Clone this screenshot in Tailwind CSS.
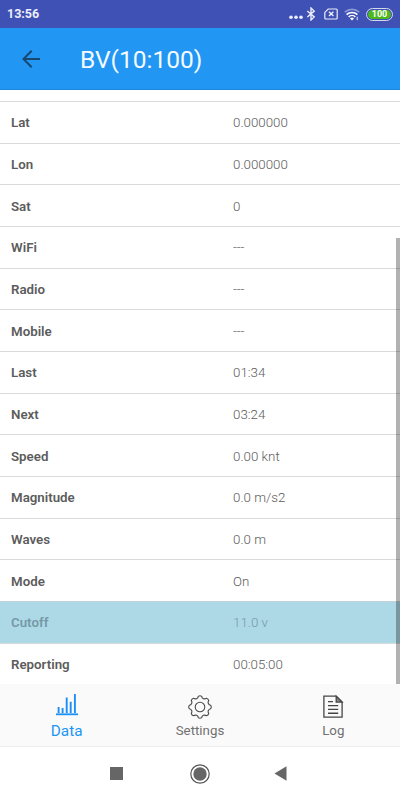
<!DOCTYPE html>
<html lang="en">
  <head>
    <meta charset="UTF-8" />
    <title>BV(10:100)</title>
    <script src="https://cdn.jsdelivr.net/npm/@tailwindcss/browser@4"></script>
  </head>
  <body class="h-[800px] w-[400px] overflow-hidden flex flex-col bg-white font-['Roboto',sans-serif] text-[#5c5c5c]">
    <!-- Status bar -->
    <div class="h-7 shrink-0 flex items-center bg-[#3f51b5] pl-[7px] pr-[7px] text-[#eceefa]">
      <span class="pt-px text-[12.5px] font-bold leading-none">13:56</span>
      <div class="ml-auto flex items-center">
        <svg class="w-[14px] h-4 mr-[3px]" viewBox="0 0 14 16" fill="#eceefa">
          <circle cx="2" cy="11.2" r="1.8" />
          <circle cx="7" cy="11.2" r="1.8" />
          <circle cx="12" cy="11.2" r="1.8" />
        </svg>
        <svg class="w-[10px] h-[14px] mr-[8px]" viewBox="0 0 10 14" fill="none" stroke="#eceefa" stroke-width="1.4">
          <path d="M1.3 4 8.2 9.9 5 13V1l3.2 3.1L1.3 10" />
        </svg>
        <svg class="w-[14px] h-[12px] mr-[6px]" viewBox="0 0 14 12" fill="none" stroke="#eceefa">
          <path d="M4.2 1H12.2a1 1 0 0 1 1 1v8a1 1 0 0 1-1 1H1.8a1 1 0 0 1-1-1V4.4z" stroke-width="1.2" />
          <path d="M5 3.7l4.4 4.4M9.4 3.7L5 8.1" stroke-width="1.4" />
        </svg>
        <svg class="w-[16px] h-[13px] mr-[6px]" viewBox="0 0 16 13" fill="none" stroke-width="1.6">
          <path d="M.8 4.2a10.5 10.5 0 0 1 14.4 0" stroke="#8b97d4" />
          <path d="M2.6 6.6a7.8 7.8 0 0 1 10.8 0M4.7 8.9a4.7 4.7 0 0 1 6.6 0" stroke="#fff" />
          <path d="M8 12.4 6 10.4a2.9 2.9 0 0 1 4 0z" fill="#fff" />
          <path d="M13.3 8.7v3.5" stroke="#a9b2e0" />
        </svg>
        <div class="w-[27px] h-[13px] rounded-full border border-[#d5d9ee] bg-[#3f51b5] p-px">
          <div class="h-full rounded-full bg-[#4cb81c] text-white text-[9px] font-bold leading-[9px] text-center">100</div>
        </div>
      </div>
    </div>

    <!-- Header -->
    <header class="h-[62px] shrink-0 flex items-center bg-[#2196f3] border-b border-[#1b86dc] pl-[22px]">
      <svg class="w-[18px] h-[18px]" viewBox="0 0 18 18" fill="none" stroke="#174870" stroke-width="2">
        <path d="M18 9H2M9.7 .8 1.5 9l8.2 8.2" />
      </svg>
      <h1 class="ml-10 pt-[3px] text-[24.5px] leading-none text-[#f4faff]">BV(10:100)</h1>
    </header>

    <!-- Values -->
    <main class="relative h-[594px] shrink-0 overflow-hidden pt-[11px] text-[13.3px]">
      <div class="h-[41.68px] flex items-center border-t border-[#dadada] pt-[2px] pl-[11px]"><b class="w-[222px] font-semibold">Lat</b><span class="font-light">0.000000</span></div>
      <div class="h-[41.68px] flex items-center border-t border-[#dadada] pt-[2px] pl-[11px]"><b class="w-[222px] font-semibold">Lon</b><span class="font-light">0.000000</span></div>
      <div class="h-[41.68px] flex items-center border-t border-[#dadada] pt-[2px] pl-[11px]"><b class="w-[222px] font-semibold">Sat</b><span class="font-light">0</span></div>
      <div class="h-[41.68px] flex items-center border-t border-[#dadada] pt-[2px] pl-[11px]"><b class="w-[222px] font-semibold">WiFi</b><span class="font-light">---</span></div>
      <div class="h-[41.68px] flex items-center border-t border-[#dadada] pt-[2px] pl-[11px]"><b class="w-[222px] font-semibold">Radio</b><span class="font-light">---</span></div>
      <div class="h-[41.68px] flex items-center border-t border-[#dadada] pt-[2px] pl-[11px]"><b class="w-[222px] font-semibold">Mobile</b><span class="font-light">---</span></div>
      <div class="h-[41.68px] flex items-center border-t border-[#dadada] pt-[2px] pl-[11px]"><b class="w-[222px] font-semibold">Last</b><span class="font-light">01:34</span></div>
      <div class="h-[41.68px] flex items-center border-t border-[#dadada] pt-[2px] pl-[11px]"><b class="w-[222px] font-semibold">Next</b><span class="font-light">03:24</span></div>
      <div class="h-[41.68px] flex items-center border-t border-[#dadada] pt-[2px] pl-[11px]"><b class="w-[222px] font-semibold">Speed</b><span class="font-light">0.00 knt</span></div>
      <div class="h-[41.68px] flex items-center border-t border-[#dadada] pt-[2px] pl-[11px]"><b class="w-[222px] font-semibold">Magnitude</b><span class="font-light">0.0 m/s2</span></div>
      <div class="h-[41.68px] flex items-center border-t border-[#dadada] pt-[2px] pl-[11px]"><b class="w-[222px] font-semibold">Waves</b><span class="font-light">0.0 m</span></div>
      <div class="h-[41.68px] flex items-center border-t border-[#dadada] pt-[2px] pl-[11px]"><b class="w-[222px] font-semibold">Mode</b><span class="font-light">On</span></div>
      <div class="h-[41.68px] flex items-center border-t border-[#c3d3d8] bg-[#add8e6] pt-[2px] pl-[11px] text-[#7499a6]"><b class="w-[222px] font-semibold">Cutoff</b><span class="font-light">11.0 v</span></div>
      <div class="h-[41.68px] flex items-center border-t border-[#dadada] pt-[2px] pl-[11px]"><b class="w-[222px] font-semibold">Reporting</b><span class="font-light">00:05:00</span></div>
      <!-- Scrollbar thumb -->
      <div class="absolute right-0 bottom-0 w-1 h-[446px] bg-black/30"></div>
    </main>

    <!-- Tabs -->
    <nav class="h-[63px] shrink-0 grid grid-cols-3 bg-[#fafafa] border-b border-[#ededed] text-[13.3px] text-[#707070]">
      <div class="flex flex-col items-center pt-[10px] text-[#2196f3]">
        <svg class="w-6 h-6" viewBox="0 0 24 24" fill="none" stroke="#1b8ff5">
          <path d="M1 20.3h22" stroke-width="1.8" />
          <path d="M3.6 19v-6M7.6 19v-5M11.7 19V3.5M15.7 19V7.8M19.9 19V-.2" stroke-width="1.9" />
        </svg>
        <span class="mt-[4px] text-[15.3px] leading-[18px]">Data</span>
      </div>
      <div class="flex flex-col items-center pt-[11px]">
        <svg class="w-6 h-6" viewBox="0 0 24 24" fill="none" stroke="#4a4a4a" stroke-width="1.1" stroke-linejoin="round">
          <path d="M10.3 1.33a3 3 0 0 1 3.4 0A2.9 2.9 0 0 0 18.35 3.26a3 3 0 0 1 2.39 2.39A2.9 2.9 0 0 0 22.67 10.3a3 3 0 0 1 0 3.4A2.9 2.9 0 0 0 20.74 18.35a3 3 0 0 1-2.39 2.39A2.9 2.9 0 0 0 13.7 22.67a3 3 0 0 1-3.4 0A2.9 2.9 0 0 0 5.65 20.74a3 3 0 0 1-2.39-2.39A2.9 2.9 0 0 0 1.33 13.7a3 3 0 0 1 0-3.4A2.9 2.9 0 0 0 3.26 5.65a3 3 0 0 1 2.39-2.39A2.9 2.9 0 0 0 10.3 1.33z" />
          <circle cx="12" cy="12" r="4.8" />
        </svg>
        <span class="mt-[3px] leading-[18px]">Settings</span>
      </div>
      <div class="flex flex-col items-center pt-[10px]">
        <svg class="w-6 h-6" viewBox="0 0 24 24" fill="none" stroke="#454545" stroke-width="1.3">
          <path d="M2.9 2.2h12.3l5.9 5.9v15H2.9z" />
          <path d="M15.2 2.2v5.9h5.9z" fill="#888" />
          <path d="M7 7.6h5M7 11.6h10.2M7 15.4h10.2M7 19.3h10.2" stroke-width="1.4" />
        </svg>
        <span class="mt-[4px] leading-[18px]">Log</span>
      </div>
    </nav>

    <!-- System navigation -->
    <div class="flex-1 flex items-center pl-[110px]">
      <div class="w-[13px] h-[13px] bg-[#666]"></div>
      <svg class="ml-[67px] w-5 h-5" viewBox="0 0 20 20" fill="none">
        <circle cx="10" cy="10" r="9.2" stroke="#555" stroke-width="1.2" />
        <circle cx="10" cy="10" r="6.7" fill="#666" />
      </svg>
      <svg class="ml-[64px] w-[13px] h-[15px]" viewBox="0 0 13 15" fill="#666">
        <path d="M.5 7.5 12.5.3v14.4z" />
      </svg>
    </div>
  </body>
</html>
